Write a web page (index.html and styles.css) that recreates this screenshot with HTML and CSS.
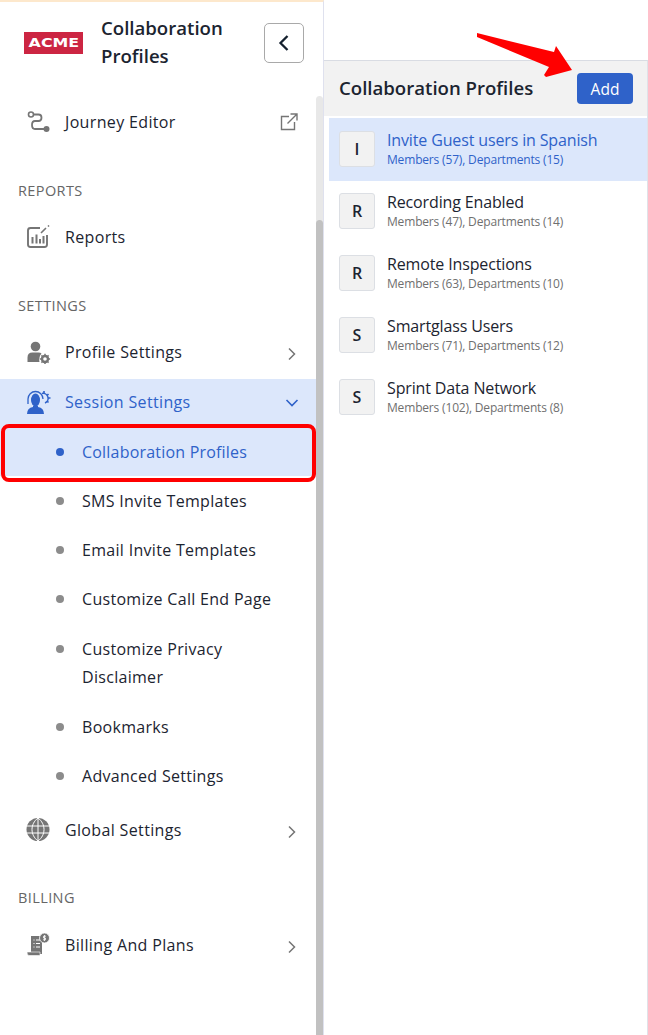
FILE: index.html
```html
<!DOCTYPE html>
<html lang="en">
<head>
<meta charset="utf-8">
<title>Collaboration Profiles</title>
<link rel="stylesheet" href="styles.css">
</head>
<body>
<div class="page">
  <aside class="sidebar">
    <header class="brand">
      <div class="logo"><span class="logo-text">ACME</span></div>
      <h1 class="brand-title">Collaboration Profiles</h1>
      <button class="collapse" aria-label="Collapse">
        <svg width="14" height="18" viewBox="0 0 14 18"><path d="M10.500 2 3.500 9l7 7" fill="none" stroke="#14202e" stroke-width="2.300"/></svg>
      </button>
    </header>
    <div class="scroll-area">
      <nav class="nav">
        <a class="item">
          <svg class="icon" width="26" height="24" viewBox="0 0 26 24"><circle cx="6" cy="4.500" r="2.500" fill="none" stroke="#757575" stroke-width="1.600"/><circle cx="21.500" cy="19" r="3" fill="#757575"/><path d="M8.500 4.500h5c4 0 4 6.500 0 6.500H10c-4 0-4 8 0 8h9" fill="none" stroke="#757575" stroke-width="1.800"/></svg>
          <span class="label">Journey Editor</span>
          <svg class="trail ext" width="18" height="18" viewBox="0 0 18 18"><path d="M9 3.500H1.500v13h13V9M7.500 10.500 16.500 1.500M10.500 1h6.500v6.500" fill="none" stroke="#757575" stroke-width="1.400"/></svg>
        </a>
        <h2 class="group g-reports">REPORTS</h2>
        <a class="item">
          <svg class="icon" width="26" height="24" viewBox="0 0 26 24"><path d="M15 3H5.500Q3 3 3 5.500v14Q3 22 5.500 22h14q2.500 0 2.500-2.500V10" fill="none" stroke="#757575" stroke-width="1.900"/><path d="M7.500 12v6.500M11.500 9.500v9M15 14v4.500M18.500 11v7.500" stroke="#757575" stroke-width="2"/><path d="M16 8l5-5M23 1.500l1-1" stroke="#757575" stroke-width="1.600"/></svg>
          <span class="label">Reports</span>
        </a>
        <h2 class="group g-settings">SETTINGS</h2>
        <a class="item">
          <svg class="icon" width="26" height="24" viewBox="0 0 26 24"><circle cx="10.500" cy="6.500" r="4.800" fill="#757575"/><path d="M2.500 22v-4.500q0-5 5-5h6q2 0 3 1-3 3.500-2 8.500z" fill="#757575"/><circle cx="20" cy="19" r="3" fill="none" stroke="#757575" stroke-width="2.400"/><path d="M20 13.800v2M20 22.200v2M14.900 19h2M23.100 19h2M16.400 15.400l1.400 1.400M22.200 21.200l1.400 1.400M16.400 22.600l1.400-1.400M22.200 16.800l1.400-1.400" stroke="#757575" stroke-width="1.500"/></svg>
          <span class="label">Profile Settings</span>
          <svg class="trail chev" width="10" height="14" viewBox="0 0 10 14"><path d="M2 1.500 7.500 7 2 12.500" fill="none" stroke="#757575" stroke-width="1.500"/></svg>
        </a>
        <a class="item open">
          <svg class="icon" width="26" height="24" viewBox="0 0 26 24"><path d="M3 14V9a7.500 7.500 0 0 1 15 0" fill="none" stroke="#2f62c9" stroke-width="1.300"/><ellipse cx="10.500" cy="10" rx="4.500" ry="6.500" fill="#2f62c9"/><path d="M2 24q0-6 6-7v-1h5v1q6 1 6 7z" fill="#2f62c9"/><path d="M17 3.500a5 5 0 0 1 3 9.500" fill="none" stroke="#2f62c9" stroke-width="1.500"/><path d="M19 1v2.500M23.500 4l-1.500 1.500M25.500 8H23M23.500 12.500 22 11" stroke="#2f62c9" stroke-width="1.600"/></svg>
          <span class="label">Session Settings</span>
          <svg class="trail chev-down" width="14" height="10" viewBox="0 0 14 10"><path d="M1.500 2 7 7.500 12.500 2" fill="none" stroke="#2f62c9" stroke-width="1.600"/></svg>
        </a>
        <ul class="sub">
          <li class="sub-item current">Collaboration Profiles</li>
          <li class="sub-item">SMS Invite Templates</li>
          <li class="sub-item">Email Invite Templates</li>
          <li class="sub-item">Customize Call End Page</li>
          <li class="sub-item two-line">Customize Privacy Disclaimer</li>
          <li class="sub-item">Bookmarks</li>
          <li class="sub-item">Advanced Settings</li>
        </ul>
        <a class="item">
          <svg class="icon" width="26" height="24" viewBox="0 0 26 24"><circle cx="13" cy="11.500" r="11.500" fill="#757575"/><path d="M1.500 8h23M1.500 15h23M13 0v23M13 0C5 6 5 17 13 23M13 0c8 6 8 17 0 23" fill="none" stroke="#fff" stroke-width="1"/></svg>
          <span class="label">Global Settings</span>
          <svg class="trail chev" width="10" height="14" viewBox="0 0 10 14"><path d="M2 1.500 7.500 7 2 12.500" fill="none" stroke="#757575" stroke-width="1.500"/></svg>
        </a>
        <h2 class="group g-billing">BILLING</h2>
        <a class="item">
          <svg class="icon" width="26" height="24" viewBox="0 0 26 24"><path d="M6 3h11v18H6z" fill="#757575"/><path d="M2 19h13v3.500H4Q2 22.500 2 19z" fill="#757575" stroke="#fff" stroke-width=".6"/><path d="M8.500 7h1M11 7h4M8.500 10.500h1M11 10.500h4M8.500 14h1M11 14h4" stroke="#fff" stroke-width="1.200"/><circle cx="19.500" cy="5" r="5" fill="#757575" stroke="#fff" stroke-width=".8"/><path d="M21 3.200h-2.500v1.800h2v1.800H18M19.500 2v6" stroke="#fff" stroke-width=".8" fill="none"/></svg>
          <span class="label">Billing And Plans</span>
          <svg class="trail chev" width="10" height="14" viewBox="0 0 10 14"><path d="M2 1.500 7.500 7 2 12.500" fill="none" stroke="#757575" stroke-width="1.500"/></svg>
        </a>
      </nav>
      <div class="track"><div class="thumb"></div></div>
    </div>
    <div class="highlight"></div>
  </aside>
  <main class="panel">
    <div class="panel-head">
      <h2 class="panel-title">Collaboration Profiles</h2>
      <button class="add">Add</button>
    </div>
    <ul class="profiles">
      <li class="profile active"><span class="badge">I</span><div><div class="p-name">Invite Guest users in Spanish</div><div class="p-meta">Members (57), Departments (15)</div></div></li>
      <li class="profile"><span class="badge">R</span><div><div class="p-name">Recording Enabled</div><div class="p-meta">Members (47), Departments (14)</div></div></li>
      <li class="profile"><span class="badge">R</span><div><div class="p-name">Remote Inspections</div><div class="p-meta">Members (63), Departments (10)</div></div></li>
      <li class="profile"><span class="badge">S</span><div><div class="p-name">Smartglass Users</div><div class="p-meta">Members (71), Departments (12)</div></div></li>
      <li class="profile"><span class="badge">S</span><div><div class="p-name">Sprint Data Network</div><div class="p-meta">Members (102), Departments (8)</div></div></li>
    </ul>
  </main>
  <svg class="arrow" width="100" height="50" viewBox="0 0 100 50"><path d="M0 1 77 20 79 14 95 38 69 45 67 43 72 35 0 5z" fill="#ff0000"/></svg>
</div>
</body>
</html>
```
FILE: styles.css
```css
* { box-sizing: border-box; }
html, body { margin: 0; padding: 0; }
body { font-family: "Open Sans", "Noto Sans", sans-serif; color: #1c2430; background: #fff; }
h1, h2, ul { margin: 0; padding: 0; font-weight: inherit; list-style: none; }
.page { position: relative; display: flex; width: 648px; height: 1035px; overflow: hidden; }
.sidebar { position: relative; width: 324px; flex: none; display: flex; flex-direction: column; border-top: 2px solid #fde8cc; border-right: 1px solid #dfe1ee; }
.brand { display: flex; align-items: center; height: 94px; flex: none; padding: 0 19px 12px 24px; }
.logo { width: 59px; height: 22px; background: #cc2542; flex: none; display: flex; align-items: center; justify-content: center; }
.logo-text { display: inline-block; color: #fff; font: 700 12.500px/22px "DejaVu Sans", sans-serif; transform: scaleX(1.27); }
.brand-title { width: 163px; margin-left: 18px; margin-bottom: 2px; font-size: 18.600px; font-weight: 600; line-height: 28.500px; color: #1c2430; flex: none; }
.collapse { width: 40px; height: 40px; flex: none; display: flex; align-items: center; justify-content: center; border: 1px solid #a9a9a9; border-radius: 5px; background: #fff; padding: 0; }
.scroll-area { position: relative; flex: 1; display: flex; }
.nav { width: 316px; flex: none; padding-top: 1px; }
.item { display: flex; align-items: center; height: 50px; padding: 0 20px 0 25px; font-size: 16px; letter-spacing: .35px; color: #1c2430; position: relative; }
.icon { flex: none; margin-right: 14px; }
.label { flex: 1; }
.item.open { background: #dce7fb; color: #2f62c9; height: 46px; margin-top: 2px; }
.trail { flex: none; }
.ext { margin-right: -2px; }
.chev { margin-right: -1px; margin-top: 4px; }
.chev-down { margin-right: -3px; margin-top: 2px; }
.group { font-size: 14.500px; letter-spacing: .4px; line-height: 20px; color: #666; padding-left: 18px; }
.g-reports { margin-top: 34px; margin-bottom: 11px; }
.g-settings { margin-top: 34px; margin-bottom: 11px; }
.g-billing { margin-top: 33px; margin-bottom: 12px; }
.sub { padding-bottom: 5px; }
.sub-item { position: relative; padding: 11px 40px 10px 82px; font-size: 16px; letter-spacing: .3px; line-height: 28px; color: #1c2430; }
.sub-item::before { content: ""; position: absolute; left: 56px; top: 21px; width: 8px; height: 8px; border-radius: 50%; background: #8c8c8c; }
.sub-item.current { color: #2f62c9; background: #dce7fb; padding-top: 13px; letter-spacing: .2px; }
.sub-item.current::before { top: 23px; background: #2f62c9; }
.sub-item.two-line { padding-top: 12px; padding-bottom: 11px; }
.sub-item.two-line::before { top: 22px; }
.track { width: 7px; flex: none; background: #e8e8e8; position: relative; border-radius: 4px 4px 0 0; }
.thumb { position: absolute; left: 0; right: 0; top: 124px; bottom: 0; background: #c1c1c1; border-radius: 4px 4px 0 0; }
.highlight { position: absolute; left: 1px; top: 422px; width: 315px; height: 58px; border: 4px solid #ff0000; border-radius: 8px; pointer-events: none; }
.panel { flex: 1; margin-top: 60px; border-top: 1px solid #d9dce3; border-right: 1px solid #e0e2e8; }
.panel-head { display: flex; align-items: center; justify-content: space-between; height: 55px; padding: 0 14px 0 15px; background: #f2f2f2; }
.panel-title { font-size: 18.600px; font-weight: 600; color: #1c2430; padding-bottom: 2px; }
.add { width: 56px; height: 31px; border: 0; border-radius: 4px; background: #2f62c9; color: #fff; font: 500 15.500px "Open Sans", sans-serif; padding: 0; }
.profiles { padding: 2px 0 0 5px; }
.profile { display: flex; align-items: center; height: 62px; padding-left: 10px; gap: 12px; }
.profile.active { background: #dce7fb; color: #2f62c9; box-shadow: 0 1px 0 #dce7fb; }
.badge { width: 36px; height: 36px; flex: none; display: flex; align-items: center; justify-content: center; background: #f2f2f2; border: 1px solid #dcdfe4; border-radius: 3px; font-size: 16px; font-weight: 600; color: #1c2430; }
.p-name { font-size: 16px; letter-spacing: -.14px; line-height: 21px; color: #1c2430; }
.p-meta { font-size: 12px; letter-spacing: -.17px; line-height: 17px; color: #6f6f6f; }
.active .p-name, .active .p-meta { color: #2f62c9; }
.arrow { position: absolute; left: 477px; top: 32px; }
```
